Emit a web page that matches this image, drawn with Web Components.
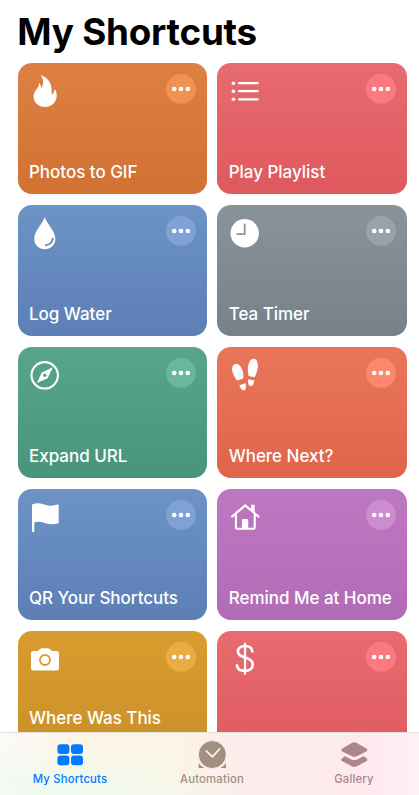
<!DOCTYPE html>
<html lang="en">
<head>
<meta charset="utf-8">
<title>My Shortcuts</title>
<style>
  html, body {
    margin: 0;
    height: 100%;
    overflow: hidden;
    background: #fff;
  }
  body {
    font-family: Inter, "Liberation Sans", sans-serif;
  }
</style>
</head>
<body>
<shortcuts-app>
  <span slot="title">My Shortcuts</span>
  <shortcut-card icon="flame" from="#dd8043" to="#d17233" more="#f09253">Photos to GIF</shortcut-card>
  <shortcut-card icon="list" from="#e76b70" to="#df595e" more="#fb797f">Play Playlist</shortcut-card>
  <shortcut-card icon="drop" from="#6d93c5" to="#5c7fb6" more="#80a1d5">Log Water</shortcut-card>
  <shortcut-card icon="clock" from="#89939a" to="#76818a" more="#98a2aa">Tea Timer</shortcut-card>
  <shortcut-card icon="compass" from="#58a58b" to="#49957c" more="#6cb69d">Expand URL</shortcut-card>
  <shortcut-card icon="steps" from="#e9765a" to="#e1644a" more="#fe886f">Where Next?</shortcut-card>
  <shortcut-card icon="flag" from="#6d93c5" to="#5c7fb6" more="#80a1d5">QR Your Shortcuts</shortcut-card>
  <shortcut-card icon="house" from="#be78c2" to="#b26cb6" more="#cb8cd0">Remind Me at Home</shortcut-card>
  <shortcut-card icon="camera" from="#d99c2f" to="#c98f27" more="#e8ac45" lines="2">Where Was This</shortcut-card>
  <shortcut-card icon="dollar" from="#e76b70" to="#df595e" more="#fb797f"></shortcut-card>
  <tab-item slot="tabs" icon="grid" color="#047aff">My Shortcuts</tab-item>
  <tab-item slot="tabs" icon="automation" color="#a19082">Automation</tab-item>
  <tab-item slot="tabs" icon="gallery" color="#ab868d">Gallery</tab-item>
</shortcuts-app>

<script>
/**** ICONS */
const cardIcons = {
  flame: `<path fill="#fff" d="M13.6 3C20 5 24.6 10.5 24.6 17.5C24.6 19.5 24.5 21 25 22.5C26.5 21.5 27.2 19.5 27.5 17C29.3 19 29.9 21.5 29.7 24C29.3 30.5 24.5 35 18 35C11.5 35 6.6 30.5 6.6 24.5C6.6 20 9.5 17.5 11 15.2C11.9 13.8 12.1 12.5 11.9 10.7C13.4 12 14.2 14 14.2 16.3C16.8 12.5 17.2 7.5 13.6 3Z"/>`,
  list: `<g fill="#fff"><circle cx="6.4" cy="11.2" r="1.8"/><circle cx="6.4" cy="19.2" r="1.8"/><circle cx="6.4" cy="27.3" r="1.8"/></g>
    <path stroke="#fff" stroke-width="2.2" stroke-linecap="round" d="M12 11.2H30.7M12 19.2H30.7M12 27.3H30.7"/>`,
  drop: `<path fill="#fff" d="M17.7 3.3C20 10 28.4 17.5 28.4 24.8C28.4 31 23.7 35.3 17.9 35.3C12 35.3 7.2 31 7.2 24.8C7.2 17.5 15.5 10 17.7 3.3Z"/>
    <path fill="none" stroke="var(--tone)" stroke-width="2" stroke-linecap="round" d="M18.9 31.2C22.6 30.7 25.2 28 25.8 24.6"/>`,
  clock: `<circle cx="17.7" cy="19.3" r="14.2" fill="#fff"/>
    <path fill="none" stroke="var(--tone)" stroke-width="1.8" stroke-linecap="round" stroke-linejoin="round" d="M17.7 10.3V20.2H10.3"/>`,
  compass: `<circle cx="17.7" cy="19.3" r="13.2" fill="none" stroke="#fff" stroke-width="2.1"/>
    <path fill="#fff" d="M25.8 11.2L20.6 22.2L9.9 27L14.8 16.4Z"/><circle cx="17.7" cy="19.3" r="1.7" fill="var(--tone)"/>`,
  steps: `<g fill="#fff">
    <path d="M8.2 8C11.5 6.6 14.6 11 15.8 15.5C16.6 18.5 16.4 20.5 16.3 22.5L9.9 24.6C8.5 22 5.6 18.5 5.1 14C4.8 11 6 8.7 8.2 8Z"/>
    <path d="M12.3 29.2L18.3 27.2C19.5 31 18.8 33.6 17.2 34.2C15.2 34.8 13.6 32.5 12.3 29.2Z"/>
    <path d="M27 2.8C30.3 3.3 31.1 7.5 30.8 11.5C30.5 15.5 28.7 18.5 27.7 21.3L21.5 20C21.5 17.5 20.5 15 20.9 11.2C21.4 7 23.5 2.4 27 2.8Z"/>
    <path d="M21.2 23.2L27.3 24.4C26.7 28.5 25.3 30.5 23.3 30C21.3 29.5 20.7 27.3 21.2 23.2Z"/></g>`,
  flag: `<path fill="#fff" d="M5 33V6.7C7.5 5 12 4.7 16.5 6.2C21.5 7.9 26 8.3 30.2 6.6C31 6.3 31.7 6.6 31.7 7.5V24.4C31.7 25 31.3 25.4 30.7 25.6C26.5 26.9 22 26.3 17 24.8C13.5 23.7 10.5 23.5 7.3 24.5V33C7.3 34.5 5 34.5 5 33Z"/>`,
  house: `<path fill="none" stroke="#fff" stroke-width="2.1" stroke-linecap="round" stroke-linejoin="round" d="M5 18.6L18.2 7.4L31.5 18.6M8.9 16.5V29.5Q8.9 30.7 10.1 30.7H26.5Q27.7 30.7 27.7 29.5V16.5"/>
    <path fill="#fff" d="M14.9 31V22.2Q14.9 21 16.1 21H20Q21.2 21 21.2 22.2V31ZM24 12.5V7.5Q24 6.7 24.8 6.7H26.9Q27.7 6.7 27.7 7.5V15.5Z"/>`,
  camera: `<path fill="#fff" d="M6.5 11H10.5C11.8 11 12 9.8 13 9C13.6 8.5 14.3 8.3 15.2 8.3H20.8C21.7 8.3 22.4 8.5 23 9C24 9.8 24.2 11 25.5 11H29.5Q32 11 32 13.5V27.9Q32 30.4 29.5 30.4H6.5Q4 30.4 4 27.9V13.5Q4 11 6.5 11Z"/>
    <circle cx="18" cy="20" r="5" fill="none" stroke="var(--tone)" stroke-width="1.9"/>`,
  dollar: `<path fill="none" stroke="#fff" stroke-width="2.7" stroke-linecap="round" d="M25.3 11.3C24.9 7.9 22 6 18 6C13.8 6 10.9 8.2 10.9 11.5C10.9 15.2 14 16.4 18 17.5C22.5 18.7 25.7 20.2 25.7 24.4C25.7 28.5 22.4 30.9 18 30.9C13.3 30.9 10.3 28.9 9.9 25.4"/>
    <path stroke="#fff" stroke-width="2.3" stroke-linecap="round" d="M18 3.6V33.7"/>`
}

const tabIcons = {
  grid: `<g fill="currentColor"><rect x="5.4" y="6.2" width="12" height="9.7" rx="3"/><rect x="19" y="6.2" width="12" height="9.7" rx="3"/>
    <rect x="5.4" y="17.6" width="12" height="9.7" rx="3"/><rect x="19" y="17.6" width="12" height="9.7" rx="3"/></g>`,
  automation: `<path fill="currentColor" d="M4.7 25Q7 28.5 10.2 30H4.7ZM31.9 25Q29.6 28.5 26.4 30H31.9Z"/>
    <circle cx="18.3" cy="16.6" r="14" fill="currentColor" stroke="#fdf0e8" stroke-width="1"/>
    <path fill="none" stroke="#fdf3e8" stroke-width="1.7" stroke-linecap="round" stroke-linejoin="round" d="M12.3 12.9L18.5 18.9L25.6 10.9"/>`,
  gallery: `<path fill="currentColor" d="M5.8 10.8L15.8 5Q18.3 3.6 20.8 5L30.8 10.8Q32 12 30.8 13.2L20.8 18.3Q18.3 19.4 15.8 18.3L5.8 13.2Q4.6 12 5.8 10.8Z"/>
    <path fill="currentColor" d="M5.8 20.4L8.3 18.6Q9 18.2 9.8 18.6L15.3 21.4Q18.3 22.7 21.3 21.4L26.8 18.6Q27.6 18.2 28.3 18.6L30.8 20.4Q32 21.7 30.8 22.9L20.8 28.3Q18.3 29.4 15.8 28.3L5.8 22.9Q4.6 21.7 5.8 20.4Z"/>`
}

/**** SHORTCUT CARD */
class ShortcutCard extends HTMLElement {
  constructor() {
    super()
    const shadow = this.attachShadow({mode: 'open'})
    shadow.innerHTML = `
      <style>
        :host {
          --tone: ${this.getAttribute('from')};
          display: flex;
          flex-direction: column;
          justify-content: space-between;
          box-sizing: border-box;
          padding: 8.8px 11.3px ${this.getAttribute('lines') === '2' ? 33 : 10.5}px 9.4px;
          border-radius: 14px;
          background: linear-gradient(${this.getAttribute('from')}, ${this.getAttribute('to')});
        }
        header {
          display: flex;
          justify-content: space-between;
        }
        svg { display: block; }
        .more { margin-top: 2.1px; }
        .label {
          margin-left: 2px;
          color: #fff;
          font-size: 17px;
          font-weight: 500;
          line-height: 22px;
          letter-spacing: -0.02px;
          white-space: nowrap;
        }
      </style>
      <header>
        <svg width="36" height="38" viewBox="0 0 36 38">${cardIcons[this.getAttribute('icon')]}</svg>
        <svg class="more" width="30" height="30" viewBox="0 0 30 30">
          <circle cx="15" cy="15" r="15" fill="${this.getAttribute('more')}"/>
          <g fill="#fff"><circle cx="8.2" cy="15" r="2.3"/><circle cx="15" cy="15" r="2.3"/><circle cx="21.8" cy="15" r="2.3"/></g>
        </svg>
      </header>
      <div class="label"><slot></slot></div>
    `
  }
}
customElements.define('shortcut-card', ShortcutCard)

/**** TAB ITEM */
class TabItem extends HTMLElement {
  constructor() {
    super()
    const shadow = this.attachShadow({mode: 'open'})
    shadow.innerHTML = `
      <style>
        :host {
          display: flex;
          flex-direction: column;
          align-items: center;
          color: ${this.getAttribute('color')};
          font-size: 11.3px;
          font-weight: 500;
          line-height: 14px;
          letter-spacing: 0.2px;
        }
        svg { display: block; margin-bottom: 2.5px; }
      </style>
      <svg width="36" height="32" viewBox="0 0 36 32">${tabIcons[this.getAttribute('icon')]}</svg>
      <span><slot></slot></span>
    `
  }
}
customElements.define('tab-item', TabItem)

/**** APP */
class ShortcutsApp extends HTMLElement {
  constructor() {
    super()
    const shadow = this.attachShadow({mode: 'open'})
    shadow.innerHTML = `
      <style>
        :host {
          display: flex;
          flex-direction: column;
          width: 419px;
          height: 795px;
          overflow: hidden;
        }
        main {
          flex: 1;
          min-height: 0;
          overflow: hidden;
        }
        h1 {
          margin: 0;
          padding: 9px 0 0 17.3px;
          height: 54.4px;
          font-size: 36.8px;
          font-weight: 700;
          line-height: 45px;
          letter-spacing: -0.22px;
          white-space: nowrap;
        }
        .cards {
          display: grid;
          grid-template-columns: 189.6px 189.6px;
          grid-auto-rows: 130.4px;
          gap: 11.6px 10.1px;
          padding-left: 17.6px;
        }
        nav {
          display: grid;
          grid-template-columns: 142px 142px 142px;
          box-sizing: border-box;
          height: 63.5px;
          margin-left: -1px;
          padding-top: 5px;
          border-top: 1px solid #e6e0dc;
          background:
            radial-gradient(ellipse 190px 50px at 70px 100%, rgba(236, 250, 240, 0.9), rgba(244, 250, 240, 0)),
            linear-gradient(90deg, #fbfaf8 0%, #fcf5e5 18%, #fcf4e6 42%, #fdebec 58%, #feeaee 88%, #fdf1f4 100%);
        }
      </style>
      <main>
        <h1><slot name="title"></slot></h1>
        <div class="cards"><slot></slot></div>
      </main>
      <nav><slot name="tabs"></slot></nav>
    `
  }
}
customElements.define('shortcuts-app', ShortcutsApp)
</script>
</body>
</html>
